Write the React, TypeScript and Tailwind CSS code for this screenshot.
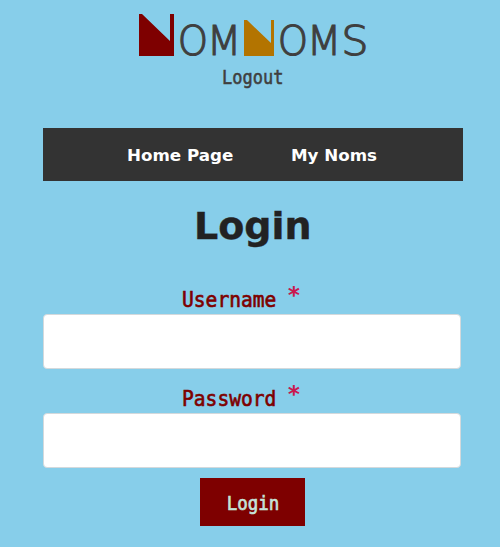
import React from "react";

function LogoLetter({ children, className }: { children: string; className: string }) {
  return (
    <span className={"flex h-[42px] items-end justify-center overflow-visible " + className}>
      <span className="block text-[41px] leading-[29px] font-extralight [-webkit-text-stroke:1.2px_#3f3f3f]">{children}</span>
    </span>
  );
}

function Field({ label, type }: { label: string; type: string }) {
  return (
    <label className="block h-[99px]">
      <span className="flex h-[30px] items-start pl-[139px] whitespace-pre">
        <span className="block w-[105px] origin-left scale-y-[1.1] pt-[3px] font-['DejaVu_Sans_Mono',monospace] text-[19.6px] leading-[26px] text-[#7e0000] [-webkit-text-stroke:0.6px_#7e0000]">{label}</span>
        <span className="block font-['DejaVu_Sans_Mono',monospace] text-[23px] leading-[22px] font-bold text-[#c9184f]">*</span>
      </span>
      <input type={type} className="block h-[55px] w-[418px] rounded-[4px] border border-[#d3d9dc] bg-white px-3 outline-none" />
    </label>
  );
}

export default function App() {
  return (
    <div className="h-[547px] w-[500px] overflow-hidden bg-[#87ceea] pt-[14px] pl-[43px] font-['DejaVu_Sans',sans-serif]">
      <header className="h-[114px]">
        <div className="ml-[96px] flex h-[42px] items-end text-[#3f3f3f]" aria-label="NomNoms">
          <span className="block h-[42px] w-[35px] bg-[#7e0000] [clip-path:polygon(0_0,3px_0,31px_27px,31px_0,100%_0,100%_100%,0_100%)]" />
          <LogoLetter className="ml-[6px] w-[26px] scale-x-[0.94]">O</LogoLetter>
          <LogoLetter className="ml-[5px] w-[26px] scale-x-[0.98]">M</LogoLetter>
          <span className="ml-[7px] block h-[36px] w-[30px] bg-[#b37400] [clip-path:polygon(0_0,3px_0,27px_23px,27px_0,100%_0,100%_100%,0_100%)]" />
          <LogoLetter className="ml-[6px] w-[26px] scale-x-[0.94]">O</LogoLetter>
          <LogoLetter className="ml-[5px] w-[26px] scale-x-[0.98]">M</LogoLetter>
          <LogoLetter className="ml-[6px] w-[24px] scale-x-[1.05]">S</LogoLetter>
        </div>
        <a className="ml-[179px] block w-[62px] scale-y-[1.1] pt-[9px] font-['DejaVu_Sans_Mono',monospace] text-[17px] leading-[24px] text-[#3f3f3f] [-webkit-text-stroke:0.5px_#3f3f3f]">Logout</a>
      </header>
      <nav className="flex h-[53px] w-[420px] items-center bg-[#333333] pt-[1px] pl-[84px] text-[16.7px] leading-[24px] font-bold whitespace-nowrap text-white">
        <a className="block w-[164px]">Home Page</a>
        <a className="block">My Noms</a>
      </nav>
      <h1 className="h-[103px] pt-[23px] pl-[151px] text-[38px] leading-[44px] font-bold text-[#222222] [-webkit-text-stroke:0.4px_#222222]">Login</h1>
      <form>
        <Field label="Username" type="text" />
        <Field label="Password" type="password" />
        <button type="button" className="mt-[-4px] ml-[157px] flex h-[48px] w-[105px] items-center justify-center bg-[#7e0000] pt-px pl-px text-[#c5e3da]">
          <span className="block scale-y-[1.1] font-['DejaVu_Sans_Mono',monospace] text-[17.5px] leading-[24px] [-webkit-text-stroke:0.6px_#c5e3da]">Login</span>
        </button>
      </form>
    </div>
  );
}
